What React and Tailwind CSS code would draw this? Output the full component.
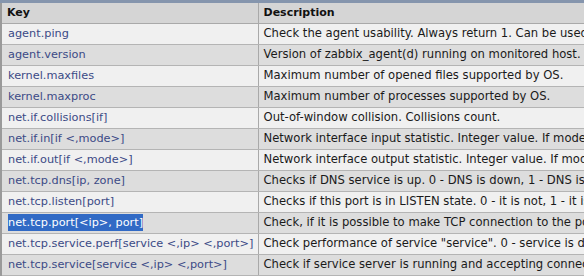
const rows = [
  ["agent.ping", "Check the agent usability. Always return 1. Can be used"],
  ["agent.version", "Version of zabbix_agent(d) running on monitored host. S"],
  ["kernel.maxfiles", "Maximum number of opened files supported by OS."],
  ["kernel.maxproc", "Maximum number of processes supported by OS."],
  ["net.if.collisions[if]", "Out-of-window collision. Collisions count."],
  ["net.if.in[if <,mode>]", "Network interface input statistic. Integer value. If mode"],
  ["net.if.out[if <,mode>]", "Network interface output statistic. Integer value. If mode"],
  ["net.tcp.dns[ip, zone]", "Checks if DNS service is up. 0 - DNS is down, 1 - DNS is"],
  ["net.tcp.listen[port]", "Checks if this port is in LISTEN state. 0 - it is not, 1 - it is"],
  ["net.tcp.port[<ip>, port]", "Check, if it is possible to make TCP connection to the po"],
  ["net.tcp.service.perf[service <,ip> <,port>]", "Check performance of service \"service\". 0 - service is d"],
  ["net.tcp.service[service <,ip> <,port>]", "Check if service server is running and accepting connect"],
];

export default function App() {
  return (
    <div className="w-[584px] h-[276px] overflow-hidden bg-white border-t-[3px] border-[#8595ad]" style={{ fontFamily: '"DejaVu Sans", Verdana, sans-serif' }}>
      <table className="border-collapse text-[11.3px] w-[700px] table-fixed">
        <colgroup>
          <col className="w-[257px]" />
          <col />
        </colgroup>
        <thead>
          <tr className="h-[20px] bg-[#d5d5d5]">
            <th className="text-left font-bold text-[11px] text-[#111] pl-[5px] pt-[1px] border-l-2 border-l-[#9a9a9a] border-r border-r-[#a9a9a9] border-b border-b-[#a9a9a9]">Key</th>
            <th className="text-left font-bold text-[11px] text-[#111] pl-[5px] pt-[1px] border-b border-b-[#a9a9a9]">Description</th>
          </tr>
        </thead>
        <tbody>
          {rows.map(([k, d], i) => (
            <tr key={k} className={`h-[21px] ${i % 2 === 0 ? "bg-[#f0f0f0]" : "bg-[#dddddd]"}`}>
              <td className="pl-[6px] pt-[1px] whitespace-nowrap text-[#3b4a86] border-l-2 border-l-[#9a9a9a] border-r border-r-[#a9a9a9] border-b border-b-[#b4b4b4]">
                {k === "net.tcp.port[<ip>, port]" ? (
                  <span className="bg-[#316ac5] text-white py-[2px]">{k}</span>
                ) : k}
              </td>
              <td className="pl-[5px] pt-[1px] whitespace-nowrap text-[11.6px] text-[#1a1a1a] border-b border-b-[#b4b4b4]">{d}</td>
            </tr>
          ))}
        </tbody>
      </table>
    </div>
  );
}
